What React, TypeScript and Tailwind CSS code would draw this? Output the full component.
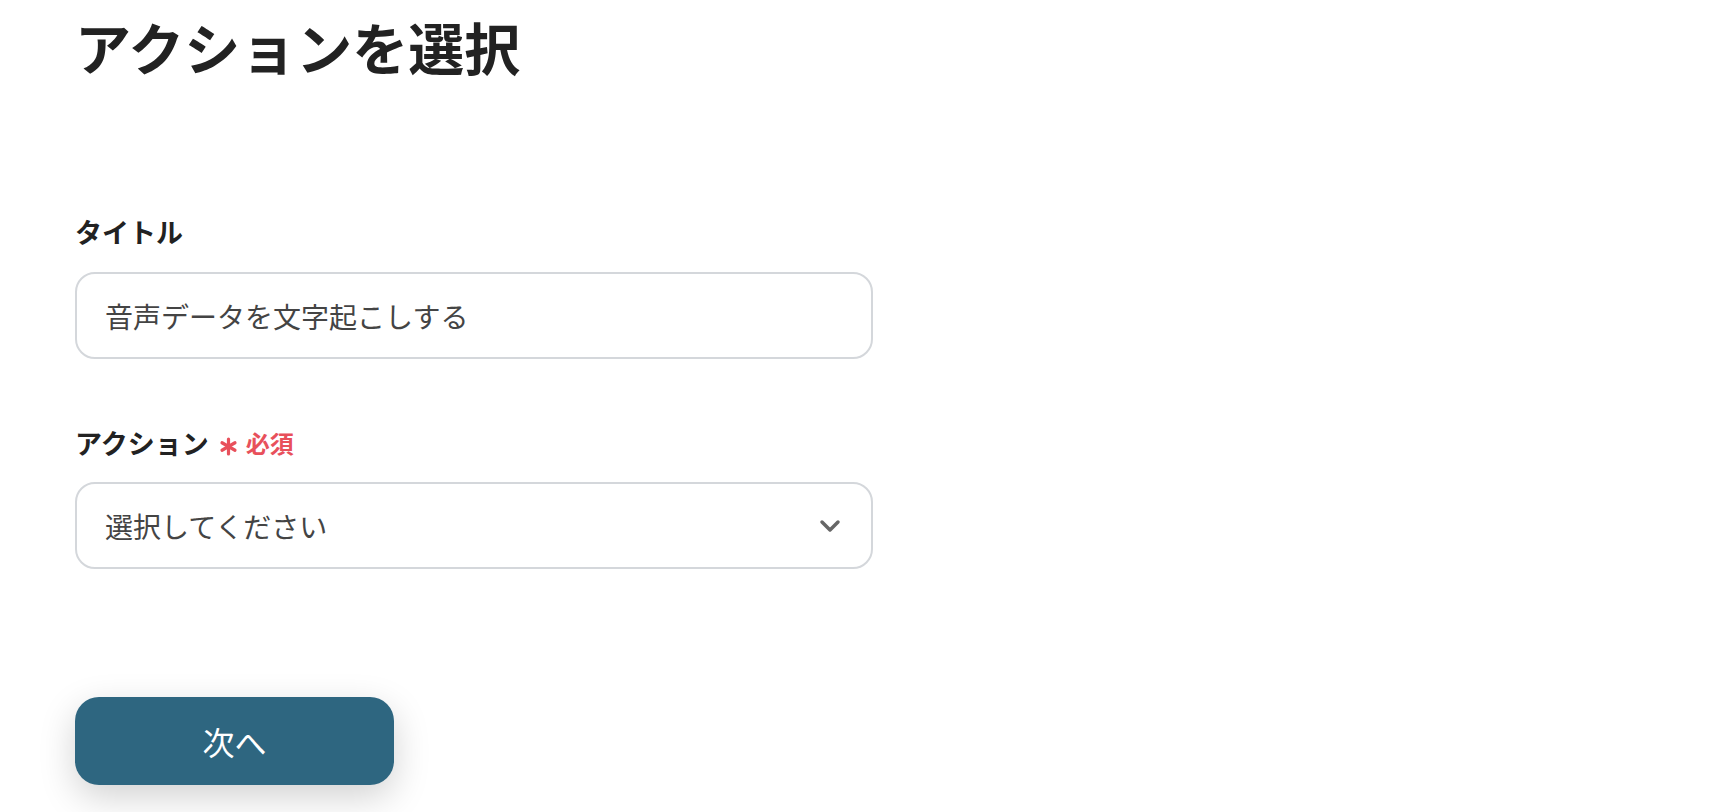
import React from "react";

const font = { fontFamily: '"Noto Sans CJK JP", "Noto Sans", sans-serif' };

const App = () => {
  return (
    <div className="min-h-screen w-full bg-white pl-[75px] pt-[18px]" style={font}>
      <h1 className="text-[56px] font-bold leading-none text-[#222222]">アクションを選択</h1>

      <div className="mt-[144px] w-[798px]">
        <label className="block text-[27px] font-bold leading-none text-[#222222]">タイトル</label>
        <div className="mt-[27px] flex h-[87px] items-center rounded-[20px] border-2 border-[#d4d7db] px-[28px]">
          <span className="text-[28px] leading-none text-[#444444]">音声データを文字起こしする</span>
        </div>
      </div>

      <div className="mt-[70px] w-[798px]">
        <div className="flex h-[27px] items-center">
          <span className="text-[27px] font-bold leading-none text-[#222222]">アクション</span>
          <svg className="ml-[10px] mt-[8px]" width="19" height="19" viewBox="0 0 19 19" fill="none">
            <g stroke="#e8505b" strokeWidth="3.2" strokeLinecap="round">
              <line x1="9.5" y1="2" x2="9.5" y2="17" />
              <line x1="3" y1="5.75" x2="16" y2="13.25" />
              <line x1="3" y1="13.25" x2="16" y2="5.75" />
            </g>
          </svg>
          <span className="ml-[8px] text-[24px] font-bold leading-none text-[#e8505b]">必須</span>
        </div>
        <div className="mt-[26px] flex h-[87px] items-center justify-between rounded-[20px] border-2 border-[#d4d7db] pl-[28px] pr-[30px]">
          <span className="text-[28px] leading-none text-[#444444]">選択してください</span>
          <svg width="22" height="14" viewBox="0 0 22 14" fill="none">
            <polyline points="3,3 11,11 19,3" stroke="#666666" strokeWidth="3.5" strokeLinecap="round" strokeLinejoin="round" />
          </svg>
        </div>
      </div>

      <button className="mt-[128px] flex h-[88px] w-[319px] items-center justify-center rounded-[24px] bg-[#2e6680] text-[32px] text-white shadow-[0_12px_36px_rgba(0,0,0,0.18)]">
        次へ
      </button>
    </div>
  );
};

export default App;
